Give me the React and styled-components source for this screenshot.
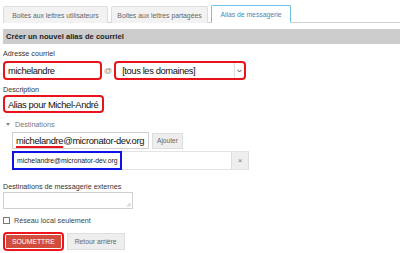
import styled, { createGlobalStyle } from 'styled-components';

const GlobalStyle = createGlobalStyle`
  body {
    margin: 0;
    background: #fff;
    font-family: "Liberation Sans", Arial, sans-serif;
  }
`;

const Page = styled.div`
  width: 400px;
  height: 253px;
  padding: 5px 0 0 3px;
  box-sizing: border-box;
  overflow: hidden;
  white-space: nowrap;
`;

const TabBar = styled.div`
  display: flex;
  gap: 3px;
  height: 17px;
  border-bottom: 1px solid #cfcfcf;
`;

const Tab = styled.div`
  width: ${(p) => p.$w}px;
  box-sizing: border-box;
  display: flex;
  align-items: center;
  justify-content: center;
  font-size: 6.8px;
  color: ${(p) => (p.$active ? '#3b8dbd' : '#666')};
  background: ${(p) => (p.$active ? '#fff' : '#f2f2f2')};
  border: 1px solid ${(p) => (p.$active ? '#6cc3e6' : '#dcdcdc')};
  border-bottom: ${(p) => (p.$active ? '1px solid #fff' : 'none')};
  height: ${(p) => (p.$active ? '18px' : '17px')};
  margin-top: ${(p) => (p.$active ? '0' : '1px')};
  border-radius: 2px 2px 0 0;
`;

const Header = styled.div`
  margin-top: 6px;
  height: 15px;
  background: #cccccc;
  padding-left: 3px;
  display: flex;
  align-items: center;
  font-size: 7.6px;
  font-weight: bold;
  color: #222;
`;

const Label = styled.div`
  margin-top: ${(p) => p.$top || 5}px;
  height: 10px;
  line-height: 10px;
  font-size: 7.2px;
  color: #333;
`;

const Row = styled.div`
  display: flex;
  align-items: center;
  margin-top: ${(p) => p.$top || 0}px;
  padding-left: ${(p) => p.$indent || 0}px;
`;

const Field = styled.div`
  width: ${(p) => p.$w}px;
  height: ${(p) => p.$h || 19}px;
  box-sizing: border-box;
  border: 2px solid #e8141b;
  border-radius: 4px;
  padding-left: 3px;
  display: flex;
  align-items: center;
  font-size: 9.4px;
  letter-spacing: -0.4px;
  color: #111;
  background: #fff;
  overflow: hidden;
`;

const At = styled.span`
  font-size: 8px;
  color: #888;
  margin: 0 2px;
`;

const SelectBox = styled(Field)`
  justify-content: space-between;
  padding-right: 0;
  padding-left: 6px;
`;

const Chevron = styled.span`
  width: 9px;
  height: 15px;
  border-left: 1px solid #ddd;
  display: flex;
  align-items: center;
  justify-content: center;
`;

const Toggle = styled.div`
  display: flex;
  align-items: center;
  gap: 5px;
  padding-left: 3px;
  margin-top: 6px;
  height: 10px;
  font-size: 7.2px;
  color: #777;
`;

const Caret = styled.span`
  width: 0;
  height: 0;
  border-left: 2.5px solid transparent;
  border-right: 2.5px solid transparent;
  border-top: 3px solid #888;
`;

const DestInput = styled.div`
  width: 137px;
  height: 17px;
  box-sizing: border-box;
  border: 1px solid #cfcfcf;
  padding-left: 3px;
  display: flex;
  align-items: center;
  font-size: 9.4px;
  letter-spacing: -0.35px;
  color: #111;
  background: #fff;
  overflow: hidden;
`;

const Underlined = styled.span`
  text-decoration: underline;
  text-decoration-color: #e8141b;
  text-decoration-thickness: 1.5px;
  text-underline-offset: 1.5px;
`;

const SmallButton = styled.div`
  height: 16px;
  box-sizing: border-box;
  padding: 0 4px;
  margin-left: 3px;
  display: flex;
  align-items: center;
  background: #eeeeee;
  border: 1px solid #dedede;
  font-size: 6.6px;
  color: #666;
`;

const TagField = styled.div`
  display: flex;
  align-items: stretch;
  width: 237px;
  height: 19px;
  box-sizing: border-box;
  border-top: 1px solid #e4e4e4;
  border-bottom: 1px solid #e4e4e4;
`;

const Tag = styled.div`
  border: 2.5px solid #0d12e6;
  padding: 0 3px;
  display: flex;
  align-items: center;
  font-size: 6.8px;
  color: #222;
  margin: -1px 0;
`;

const Spacer = styled.div`
  flex: 1;
`;

const Remove = styled.div`
  width: 16px;
  background: #eeeeee;
  border-left: 1px solid #dedede;
  border-right: 1px solid #dedede;
  display: flex;
  align-items: center;
  justify-content: center;
  font-size: 8px;
  color: #777;
`;

const TextArea = styled.div`
  position: relative;
  width: 130px;
  height: 17px;
  box-sizing: border-box;
  border: 1px solid #cfcfcf;
  background: #fff;
`;

const Grip = styled.svg`
  position: absolute;
  right: 1px;
  bottom: 1px;
`;

const CheckRow = styled.label`
  display: flex;
  align-items: center;
  gap: 4px;
  margin-top: 6px;
  height: 10px;
  font-size: 7.2px;
  color: #444;
`;

const Box = styled.span`
  width: 7px;
  height: 7px;
  box-sizing: border-box;
  border: 1px solid #777;
  background: #fff;
`;

const Actions = styled.div`
  display: flex;
  align-items: center;
  gap: 3px;
  margin-top: 7px;
`;

const Submit = styled.div`
  height: 19px;
  box-sizing: border-box;
  border: 2px solid #f0141c;
  border-radius: 4px;
  padding: 1px;
  display: flex;
`;

const SubmitInner = styled.div`
  background: #d24c3e;
  color: #fff;
  font-size: 6.8px;
  padding: 0 6px;
  display: flex;
  align-items: center;
  border-radius: 1px;
`;

const Back = styled.div`
  height: 17px;
  box-sizing: border-box;
  padding: 0 7px;
  display: flex;
  align-items: center;
  background: #eeeeee;
  border: 1px solid #dedede;
  font-size: 6.8px;
  color: #666;
`;

export default function App() {
  return (
    <>
      <GlobalStyle />
      <Page>
        <TabBar>
          <Tab $w={105}>Boites aux lettres utilisateurs</Tab>
          <Tab $w={97}>Boites aux lettres partagées</Tab>
          <Tab $w={80} $active>Alias de messagerie</Tab>
        </TabBar>
        <Header>Créer un nouvel alias de courriel</Header>

        <Label $top={5}>Adresse courriel</Label>
        <Row $top={2}>
          <Field $w={99}>michelandre</Field>
          <At>@</At>
          <SelectBox $w={132}>
            [tous les domaines]
            <Chevron>
              <svg width="5" height="4" viewBox="0 0 5 4">
                <path d="M0.5 0.8 L2.5 3 L4.5 0.8" fill="none" stroke="#555" strokeWidth="1" />
              </svg>
            </Chevron>
          </SelectBox>
        </Row>

        <Label $top={5}>Description</Label>
        <Row>
          <Field $w={101} $h={18}>Alias pour Michel-André</Field>
        </Row>

        <Toggle>
          <Caret />
          Destinations
        </Toggle>
        <Row $top={3} $indent={9}>
          <DestInput>
            <Underlined>michelandre</Underlined>@micronator-dev.org
          </DestInput>
          <SmallButton>Ajouter</SmallButton>
        </Row>
        <Row $top={2} $indent={9}>
          <TagField>
            <Tag>michelandre@micronator-dev.org</Tag>
            <Spacer />
            <Remove>×</Remove>
          </TagField>
        </Row>

        <Label $top={12}>Destinations de messagerie externes</Label>
        <TextArea>
          <Grip width="5" height="5" viewBox="0 0 5 5">
            <path d="M4.5 1 L1 4.5 M4.5 3 L3 4.5" stroke="#999" strokeWidth="0.7" />
          </Grip>
        </TextArea>

        <CheckRow>
          <Box />
          Réseau local seulement
        </CheckRow>

        <Actions>
          <Submit>
            <SubmitInner>SOUMETTRE</SubmitInner>
          </Submit>
          <Back>Retour arrière</Back>
        </Actions>
      </Page>
    </>
  );
}
